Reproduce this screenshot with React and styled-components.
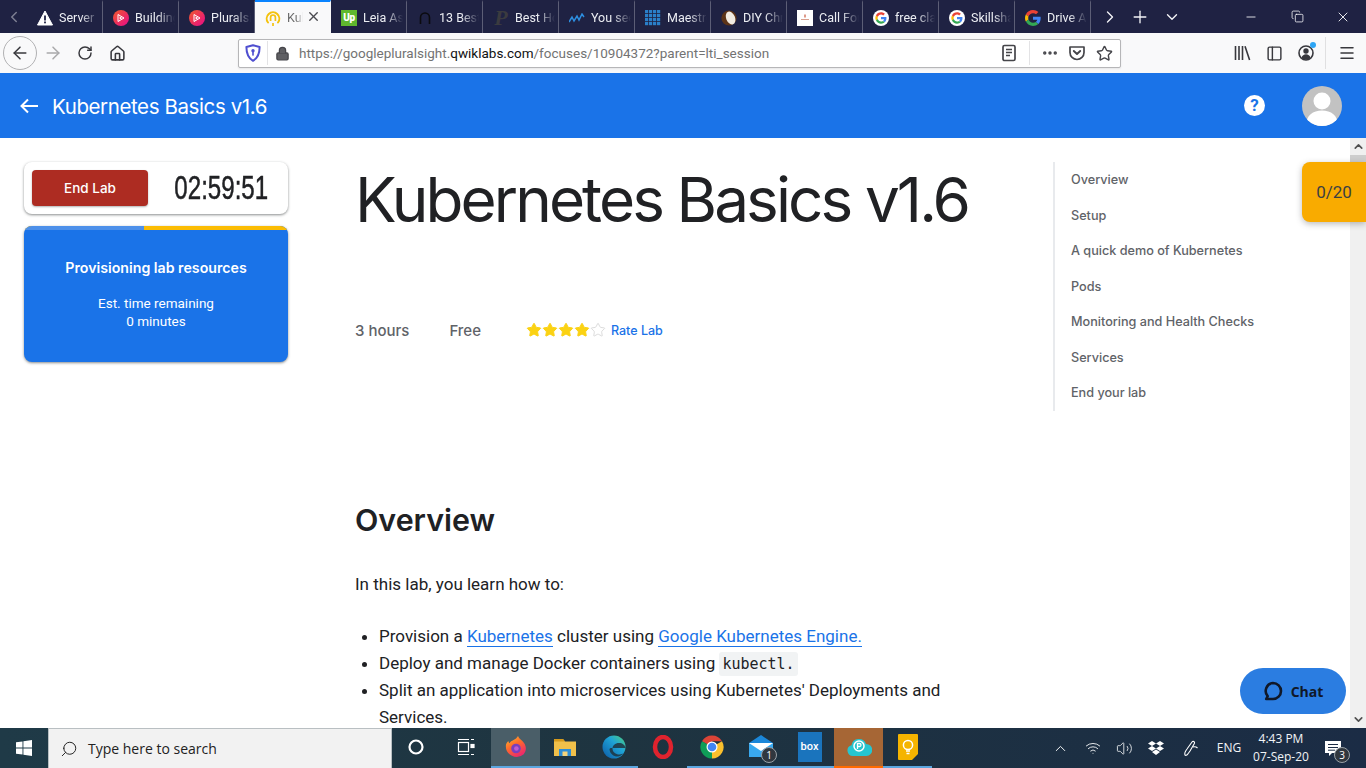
import React from "react";
import styled, { createGlobalStyle } from "styled-components";
import {
  ArrowLeft,
  ArrowRight,
  ChevronDown,
  ChevronLeft,
  ChevronRight,
  ChevronUp,
  Copy,
  Ellipsis,
  Home,
  Lock,
  Menu,
  Minus,
  PanelLeft,
  Plus,
  RotateCw,
  Search,
  Star,
  Volume2,
  Wifi,
  X,
} from "lucide-react";

const GlobalStyle = createGlobalStyle`
  html, body {
    margin: 0;
    padding: 0;
    background: #fff;
    overflow: hidden;
  }
  * { box-sizing: border-box; }
`;

const UI = `"Open Sans", "Noto Sans", sans-serif`;
const BODY = `Roboto, "Liberation Sans", sans-serif`;
const HEAD = `Inter, "Open Sans", sans-serif`;

const Frame = styled.div`
  width: 1366px;
  height: 768px;
  display: flex;
  flex-direction: column;
  overflow: hidden;
  font-family: ${BODY};
`;

/* browser chrome */
const TabStrip = styled.div`
  height: 33px;
  background: #1f2243;
  display: flex;
  align-items: stretch;
  color: #fff;
  flex: none;
`;

const StripButton = styled.div`
  width: ${(p) => p.$w}px;
  display: flex;
  align-items: center;
  justify-content: center;
  color: ${(p) => p.$color || "#f4f4f7"};
  flex: none;
`;

const Tab = styled.div`
  width: 76px;
  flex: none;
  display: flex;
  align-items: center;
  gap: 6px;
  padding-left: 10px;
  border-right: 1px solid ${(p) => (p.$active ? "transparent" : "#5c5e76")};
  background: ${(p) => (p.$active ? "#f9f9fa" : "transparent")};
  border-top: 2px solid ${(p) => (p.$active ? "#0a84ff" : "transparent")};
  color: ${(p) => (p.$active ? "#6a6a6a" : "#eceef3")};
  position: relative;
`;

const TabLabel = styled.span`
  font-family: ${BODY};
  font-size: 12.5px;
  white-space: nowrap;
  overflow: hidden;
  width: ${(p) => p.$w || 36}px;
  mask-image: linear-gradient(to right, #000 55%, transparent 100%);
`;

const TabClose = styled.span`
  position: absolute;
  right: 9px;
  top: 7px;
  color: #4a4a4f;
  display: flex;
`;

const FaviconBox = styled.div`
  width: 16px;
  height: 16px;
  flex: none;
  display: flex;
  align-items: center;
  justify-content: center;
`;

const UpBadge = styled.div`
  width: 16px;
  height: 16px;
  background: #5fb82e;
  color: #fff;
  font-family: ${BODY};
  font-size: 10px;
  font-weight: 900;
  line-height: 15px;
  text-align: center;
  letter-spacing: -0.5px;
`;

const BigP = styled.div`
  font-family: "Liberation Serif", serif;
  font-size: 22px;
  font-weight: 700;
  font-style: italic;
  color: #3b3b3f;
  line-height: 16px;
`;

const Toolbar = styled.div`
  height: 40px;
  background: #f9f9fa;
  display: flex;
  align-items: center;
  color: #38383d;
  flex: none;
  padding-left: 3px;
`;

const BackCircle = styled.div`
  width: 34px;
  height: 34px;
  border: 1px solid #b1b1b3;
  border-radius: 50%;
  display: flex;
  align-items: center;
  justify-content: center;
  background: #f9f9fa;
`;

const NavButton = styled.div`
  width: 32px;
  height: 34px;
  display: flex;
  align-items: center;
  justify-content: center;
  color: ${(p) => (p.$off ? "#a9a9ab" : "#38383d")};
`;

const UrlBar = styled.div`
  width: 883px;
  height: 29px;
  margin-left: 105px;
  background: #fff;
  border: 1px solid #b6b6b8;
  border-radius: 2px;
  display: flex;
  align-items: center;
  padding: 0 6px 0 6px;
  box-shadow: 0 1px 2px rgba(0, 0, 0, 0.08);
`;

const UrlDivider = styled.span`
  width: 1px;
  height: 24px;
  background: #e3e3e5;
  margin: ${(p) => p.$m};
  flex: none;
`;

const UrlText = styled.div`
  flex: 1;
  font-family: ${BODY};
  font-size: 13.5px;
  color: #737373;
  white-space: nowrap;
  margin-left: 9px;
  strong {
    font-weight: 400;
    color: #111;
  }
`;

const UrlIcon = styled.span`
  display: flex;
  width: ${(p) => p.$w || 20}px;
  justify-content: center;
  color: #45454a;
  flex: none;
`;

const RightTools = styled.div`
  display: flex;
  align-items: center;
  margin-left: 105px;
  color: #38383d;
`;

const ToolSlot = styled.div`
  width: 32px;
  height: 32px;
  display: flex;
  align-items: center;
  justify-content: center;
  position: relative;
`;

const Dot = styled.span`
  position: absolute;
  width: 6px;
  height: 6px;
  border-radius: 50%;
  background: #2ea5f5;
  top: 5px;
  right: 6px;
`;

const ToolDivider = styled.span`
  width: 1px;
  height: 32px;
  background: #e0e0e1;
  margin: 0 5px 0 3px;
`;

/* page */
const AppWindow = styled.div`
  flex: 1;
  min-height: 0;
  position: relative;
  display: flex;
  flex-direction: column;
`;

const AppBar = styled.header`
  height: 65px;
  flex: none;
  background: #1a73e8;
  color: #fff;
  display: flex;
  align-items: center;
  padding: 0 24px 0 19px;
`;

const AppTitle = styled.div`
  font-family: ${HEAD};
  font-size: 20.5px;
  font-weight: 400;
  margin: 2px 0 0 13px;
  letter-spacing: -0.4px;
  flex: 1;
`;

const HelpDot = styled.div`
  width: 21px;
  height: 21px;
  border-radius: 50%;
  background: #fff;
  color: #1a73e8;
  font-family: ${BODY};
  font-weight: 700;
  font-size: 17px;
  line-height: 21px;
  text-align: center;
  margin-right: 37px;
`;

const Avatar = styled.div`
  width: 40px;
  height: 40px;
  display: flex;
`;

const PageBody = styled.div`
  flex: 1;
  min-height: 0;
  display: flex;
  overflow: hidden;
`;

const Content = styled.div`
  flex: 1;
  min-width: 0;
  display: grid;
  grid-template-columns: 264px 631px 1fr;
  column-gap: 67px;
  padding: 24px 0 0 24px;
  align-items: start;
  overflow: hidden;
`;

const Sidebar = styled.aside`
  display: flex;
  flex-direction: column;
  gap: 12px;
`;

const TimerCard = styled.div`
  height: 52px;
  border-radius: 8px;
  background: #fff;
  box-shadow: 0 1px 3px rgba(60, 64, 67, 0.45), 0 1px 2px rgba(60, 64, 67, 0.2);
  display: flex;
  align-items: center;
  padding: 0 8px;
`;

const EndButton = styled.div`
  width: 116px;
  height: 36px;
  flex: none;
  border-radius: 4px;
  background: #ad2c22;
  color: #fff;
  font-family: ${HEAD};
  font-size: 13.5px;
  font-weight: 500;
  display: flex;
  align-items: center;
  justify-content: center;
  box-shadow: 0 1px 2px rgba(60, 64, 67, 0.4);
`;

const Timer = styled.div`
  flex: 1;
  min-width: 0;
  display: flex;
  justify-content: center;
  font-family: "Liberation Sans", sans-serif;
  font-size: 33px;
  color: #202124;
  line-height: 36px;
  padding-left: 14px;
  white-space: nowrap;
  span {
    flex: none;
    display: inline-block;
    transform: scaleX(0.73);
    -webkit-text-stroke: 0.5px #202124;
  }
`;

const ProvisionCard = styled.div`
  height: 136px;
  border-radius: 8px;
  overflow: hidden;
  background: #1a73e8;
  color: #fff;
  text-align: center;
  box-shadow: 0 1px 3px rgba(60, 64, 67, 0.45), 0 1px 2px rgba(60, 64, 67, 0.2);
`;

const ProgressTrack = styled.div`
  height: 4px;
  background: #fbbc04;
`;

const ProgressFill = styled.div`
  height: 4px;
  width: 120px;
  background: #4d90ea;
`;

const ProvisionTitle = styled.div`
  font-family: ${HEAD};
  font-size: 14.2px;
  font-weight: 600;
  line-height: 20px;
  margin-top: 28px;
`;

const ProvisionNote = styled.div`
  font-size: 13.5px;
  line-height: 18px;
  margin-top: 16px;
`;

const Main = styled.main`
  min-width: 0;
`;

const Title = styled.h1`
  margin: 0;
  font-family: ${HEAD};
  font-size: 62px;
  font-weight: 400;
  line-height: 76px;
  color: #202124;
  letter-spacing: -2.9px;
  white-space: nowrap;
`;

const MetaRow = styled.div`
  display: flex;
  align-items: center;
  margin-top: 80px;
  height: 24px;
  font-family: ${HEAD};
  font-size: 15px;
  font-weight: 500;
  color: #5f6368;
`;

const MetaItem = styled.span`
  margin-right: ${(p) => p.$gap}px;
`;

const Stars = styled.span`
  display: flex;
`;

const RateLink = styled.a`
  font-family: ${HEAD};
  font-size: 12.5px;
  font-weight: 500;
  color: #1a73e8;
  margin-left: 5px;
`;

const SectionTitle = styled.h2`
  margin: 160px 0 0;
  font-family: ${HEAD};
  font-size: 30.4px;
  font-weight: 600;
  line-height: 36px;
  color: #202124;
`;

const Para = styled.p`
  margin: 33px 0 0;
  font-size: 17px;
  line-height: 27px;
  color: #202124;
`;

const BulletList = styled.ul`
  margin: 25px 0 0;
  padding: 0 0 0 24px;
  max-width: 600px;
  font-size: 17px;
  line-height: 27px;
  color: #202124;
`;

const InlineLink = styled.a`
  color: #1a73e8;
  border-bottom: 1px solid #1a73e8;
`;

const Code = styled.code`
  font-family: "DejaVu Sans Mono", "Liberation Mono", monospace;
  font-size: 15px;
  line-height: 1;
  background: #f1f3f4;
  border-radius: 3px;
  padding: 3px 3px;
`;

const Toc = styled.nav`
  border-left: 2px solid #e8eaed;
  width: 240px;
  padding-left: 16px;
  display: flex;
  flex-direction: column;
`;

const TocItem = styled.div`
  font-family: ${HEAD};
  font-size: 12.65px;
  font-weight: 500;
  color: #5f6368;
  height: 35.5px;
  display: flex;
  align-items: center;
`;

const ScrollBar = styled.div`
  width: 16px;
  flex: none;
  background: #f0f0f0;
  display: flex;
  flex-direction: column;
  color: #505050;
`;

const ScrollArrow = styled.div`
  height: 17px;
  display: flex;
  align-items: center;
  justify-content: center;
  margin-top: ${(p) => p.$top || 0}px;
`;

const ScrollThumb = styled.div`
  height: 55px;
  background: #cdcdcd;
`;

const ScoreTab = styled.div`
  position: absolute;
  right: 0;
  top: 89px;
  width: 64px;
  height: 60px;
  background: #f9ab00;
  border-radius: 8px 0 0 8px;
  box-shadow: 0 2px 6px rgba(60, 64, 67, 0.35);
  color: #3c4043;
  font-size: 17px;
  display: flex;
  align-items: center;
  justify-content: center;
`;

const ChatButton = styled.div`
  position: absolute;
  left: 1240px;
  top: 595px;
  width: 106px;
  height: 46px;
  border-radius: 23px;
  background: #2b7de1;
  color: #101828;
  display: flex;
  align-items: center;
  justify-content: center;
  gap: 8px;
  font-family: "Open Sans", sans-serif;
  font-size: 14px;
  font-weight: 700;
`;

/* taskbar */
const Taskbar = styled.div`
  height: 40px;
  flex: none;
  background: linear-gradient(to right, #1f3a47 0%, #1e3440 45%, #1b2c45 100%);
  display: flex;
  align-items: stretch;
  color: #fff;
`;

const StartButton = styled.div`
  width: 48px;
  display: flex;
  align-items: center;
  justify-content: center;
  flex: none;
`;

const SearchBox = styled.div`
  width: 344px;
  flex: none;
  background: #f2f2f2;
  border: 1px solid #b9bfc2;
  border-bottom: none;
  display: flex;
  align-items: center;
  gap: 10px;
  padding-left: 11px;
  color: #222;
  font-family: ${UI};
  font-size: 14px;
`;

const MirroredSearch = styled(Search)`
  transform: scaleX(-1);
`;

const TaskSlot = styled.div`
  width: ${(p) => p.$w || 49}px;
  flex: none;
  display: flex;
  align-items: center;
  justify-content: center;
  position: relative;
  background: ${(p) => p.$bg || "transparent"};
  border-bottom: 2px solid ${(p) => p.$line || "transparent"};
`;

const CountBadge = styled.span`
  position: absolute;
  right: ${(p) => p.$r}px;
  bottom: ${(p) => p.$b}px;
  width: 16px;
  height: 16px;
  border-radius: 50%;
  background: #30373f;
  border: 1px solid #9aa2a8;
  color: #fff;
  font-family: ${UI};
  font-size: 10px;
  line-height: 14px;
  text-align: center;
`;

const Tray = styled.div`
  flex: 1;
  display: flex;
  align-items: center;
  justify-content: flex-end;
  color: #f2f4f6;
`;

const TraySlot = styled.div`
  width: ${(p) => p.$w}px;
  height: 40px;
  display: flex;
  align-items: center;
  justify-content: center;
  position: relative;
  flex: none;
`;

const TrayText = styled.div`
  font-family: ${UI};
  font-size: 12px;
  line-height: 18px;
  text-align: center;
`;

const BoxTile = styled.div`
  width: 24px;
  height: 30px;
  background: #1a74bd;
  color: #fff;
  font-family: ${BODY};
  font-size: 11px;
  font-weight: 500;
  line-height: 30px;
  text-align: center;
`;

/* drawn icons */
const GoogleG = ({ disc }) => (
  <svg width="16" height="16" viewBox="0 0 48 48">
    {disc && <circle cx="24" cy="24" r="24" fill="#fff" />}
    <g transform={disc ? "translate(7 7) scale(0.71)" : undefined}>
      <path fill="#EA4335" d="M24 9.5c3.54 0 6.71 1.22 9.21 3.6l6.85-6.85C35.9 2.38 30.47 0 24 0 14.62 0 6.51 5.38 2.56 13.22l7.98 6.19C12.43 13.72 17.74 9.5 24 9.5z" />
      <path fill="#4285F4" d="M46.98 24.55c0-1.57-.15-3.09-.38-4.55H24v9.02h12.94c-.58 2.96-2.26 5.48-4.78 7.18l7.73 6c4.51-4.18 7.09-10.36 7.09-17.65z" />
      <path fill="#FBBC05" d="M10.53 28.59c-.48-1.45-.76-2.99-.76-4.59s.27-3.14.76-4.59l-7.98-6.19C.92 16.46 0 20.12 0 24c0 3.88.92 7.54 2.56 10.78l7.97-6.19z" />
      <path fill="#34A853" d="M24 48c6.48 0 11.93-2.13 15.89-5.81l-7.73-6c-2.15 1.45-4.92 2.3-8.16 2.3-6.26 0-11.57-4.22-13.47-9.91l-7.98 6.19C6.51 42.62 14.62 48 24 48z" />
    </g>
  </svg>
);

const WarnIcon = () => (
  <svg width="16" height="16" viewBox="0 0 16 16">
    <path d="M8 1 15.5 15H.5z" fill="#fff" stroke="#fff" strokeLinejoin="round" />
    <rect x="7.1" y="5.5" width="1.8" height="5" fill="#1f2243" />
    <rect x="7.1" y="11.5" width="1.8" height="1.8" fill="#1f2243" />
  </svg>
);

const PluralsightIcon = ({ id }) => (
  <svg width="16" height="16" viewBox="0 0 16 16">
    <defs>
      <linearGradient id={id} x1="0" y1="0" x2="1" y2="1">
        <stop offset="0" stopColor="#f15b2a" />
        <stop offset="1" stopColor="#e80a89" />
      </linearGradient>
    </defs>
    <circle cx="8" cy="8" r="8" fill={`url(#${id})`} />
    <path d="M5 4.5v7l6-3.5z" fill="none" stroke="#fff" strokeWidth="1" />
    <path d="M6.6 6.4v3.2l2.7-1.6z" fill="#fff" />
  </svg>
);

const QwiklabsIcon = () => (
  <svg width="16" height="18" viewBox="0 0 16 18">
    <path d="M3 13.5A6.3 6.3 0 1 1 13 13.5" fill="none" stroke="#f4c20d" strokeWidth="2" strokeLinecap="round" />
    <path d="M5.6 12V8.4a2.4 2.4 0 0 1 4.8 0V12" fill="none" stroke="#f4c20d" strokeWidth="1.7" />
    <path d="M8 17v-3" stroke="#f4c20d" strokeWidth="1.7" />
  </svg>
);

const ArchIcon = () => (
  <svg width="14" height="14" viewBox="0 0 14 14">
    <path d="M2.5 13V6.5a4.5 4.5 0 0 1 9 0V13" fill="none" stroke="#0b0b0f" strokeWidth="1.6" />
  </svg>
);

const WaveIcon = () => (
  <svg width="16" height="10" viewBox="0 0 16 10">
    <path d="M0 9 3 4l2 4 3-5 2 4 3-6 2 3" fill="none" stroke="#2d8ee0" strokeWidth="1.5" />
  </svg>
);

const GridIcon = () => (
  <svg width="16" height="16" viewBox="0 0 16 16" fill="#2a7fc9">
    {[0, 4, 8, 12].flatMap((y) =>
      [0, 4, 8, 12].map((x) => <rect key={`${x}-${y}`} x={x} y={y} width="3.2" height="3.2" />)
    )}
  </svg>
);

const CoconutIcon = () => (
  <svg width="16" height="16" viewBox="0 0 16 16">
    <circle cx="8" cy="8" r="7.6" fill="#5c3418" />
    <ellipse cx="9.6" cy="8" rx="4.4" ry="6.8" transform="rotate(-22 9.6 8)" fill="#f1ece2" />
  </svg>
);

const PageIcon = () => (
  <svg width="16" height="16" viewBox="0 0 16 16">
    <rect width="16" height="16" fill="#fff" />
    <rect x="7.4" y="4.5" width="1.2" height="3" fill="#c9583c" />
    <rect x="4" y="9" width="8" height="1" fill="#d9a08f" />
  </svg>
);

const ShieldIcon = () => (
  <svg width="16" height="18" viewBox="0 0 16 18">
    <path d="M8 1.2 14.6 3c0 6.6-1.4 10.8-6.6 13.8C2.8 13.8 1.4 9.6 1.4 3z" fill="#fff" stroke="#4f4fd0" strokeWidth="2" strokeLinejoin="round" />
    <circle cx="8" cy="6.8" r="1.7" fill="#4f4fd0" />
    <rect x="7.2" y="7" width="1.6" height="4.6" fill="#4f4fd0" />
  </svg>
);

const ReaderIcon = () => (
  <svg width="16" height="18" viewBox="0 0 16 18" fill="none" stroke="#45454a" strokeWidth="1.7">
    <rect x="2" y="1.5" width="12" height="15" rx="1.5" />
    <path d="M5 5.5h6M5 8.5h6M5 11.5h4" strokeWidth="1.4" />
  </svg>
);

const PocketIcon = () => (
  <svg width="18" height="16" viewBox="0 0 18 16" fill="none" stroke="#45454a" strokeWidth="1.7">
    <path d="M2 2h14v5.5a7 7 0 0 1-14 0z" strokeLinejoin="round" />
    <path d="m5.8 6 3.2 3 3.2-3" strokeWidth="1.9" strokeLinecap="round" strokeLinejoin="round" />
  </svg>
);

const LibraryIcon = () => (
  <svg width="17" height="16" viewBox="0 0 17 16" fill="none" stroke="#38383d" strokeWidth="1.6">
    <path d="M1.5 1v14M5 1v14M8.5 1v14M11 1.3l4.6 13.7" />
  </svg>
);

const AccountIcon = () => (
  <svg width="16" height="18" viewBox="0 0 16 18">
    <circle cx="8" cy="9" r="7" fill="none" stroke="#38383d" strokeWidth="1.6" />
    <circle cx="8" cy="7" r="2.7" fill="#38383d" />
    <path d="M3.4 14c.7-2.7 2.5-3.8 4.6-3.8s3.9 1.1 4.6 3.8A7 7 0 0 1 3.4 14z" fill="#38383d" />
  </svg>
);

const BackArrow = () => (
  <svg width="20" height="16" viewBox="0 0 20 16" fill="none" stroke="#fff" strokeWidth="2">
    <path d="M19 8H2.5M9 1.5 2.5 8 9 14.5" />
  </svg>
);

const PersonAvatar = () => (
  <svg width="40" height="40" viewBox="0 0 40 40">
    <clipPath id="avatar-clip">
      <circle cx="20" cy="20" r="20" />
    </clipPath>
    <g clipPath="url(#avatar-clip)">
      <rect width="40" height="40" fill="#c2c2c2" />
      <circle cx="20" cy="15" r="8.5" fill="#fff" />
      <path d="M4 40c0-11 7-15.5 16-15.5S36 29 36 40z" fill="#fff" />
    </g>
  </svg>
);

const ChatBubble = () => (
  <svg width="20" height="20" viewBox="0 0 20 20" fill="none" stroke="#101828" strokeWidth="2.6">
    <path d="M10 2a8 8 0 0 1 0 16H3.2l1.5-2.8A8 8 0 0 1 10 2z" strokeLinejoin="round" />
  </svg>
);

const WinLogo = () => (
  <svg width="16" height="16" viewBox="0 0 16 16" fill="#fff">
    <path d="M0 2.3 6.5 1.4v6.2H0zM7.4 1.3 16 0v7.6H7.4zM0 8.400h6.5v6.200L0 13.700zM7.400 8.400H16V16l-8.600-1.200z" />
  </svg>
);

const CortanaRing = () => (
  <svg width="18" height="18" viewBox="0 0 18 18">
    <circle cx="9" cy="9" r="6.5" fill="none" stroke="#fff" strokeWidth="2.2" />
  </svg>
);

const TaskViewIcon = () => (
  <svg width="18" height="18" viewBox="0 0 18 18" fill="none" stroke="#fff" strokeWidth="1.2">
    <rect x="1.5" y="4.5" width="10" height="9" />
    <path d="M1 1.5h11M1 16.5h11M14 1.5h3M14 16.5h3" />
    <rect x="14" y="6.5" width="3" height="3" fill="#fff" />
  </svg>
);

const FirefoxIcon = () => (
  <svg width="24" height="24" viewBox="0 0 24 24">
    <defs>
      <linearGradient id="ff" x1="0" y1="0" x2="0.6" y2="1">
        <stop offset="0" stopColor="#ffbd2e" />
        <stop offset="0.5" stopColor="#ff6b2b" />
        <stop offset="1" stopColor="#ec2a6a" />
      </linearGradient>
    </defs>
    <path d="M14 1c1 3 4 4 6 7 2.5 3.5 2.5 8-.3 11.2A10.8 10.8 0 0 1 2 9.5C2.600 8 3.300 7 4.500 6c0 1 .3 1.600 1 2.200C7 5.200 12 5 14 1z" fill="url(#ff)" />
    <circle cx="12" cy="13.5" r="4.8" fill="#7a3fbd" />
    <circle cx="12.4" cy="13.5" r="2.3" fill="#c05ad0" />
  </svg>
);

const FolderIcon = () => (
  <svg width="22" height="22" viewBox="0 0 22 22">
    <path d="M0 3h9l2 2.5h11V20H0z" fill="#f0c04a" />
    <path d="M0 3h9l2 2.5H0z" fill="#d69a1c" />
    <rect x="5" y="13" width="12" height="7" fill="#2c8dd6" />
    <rect x="8.5" y="15.5" width="5" height="4.5" fill="#f4d57c" />
  </svg>
);

const EdgeIcon = () => (
  <svg width="24" height="24" viewBox="0 0 24 24">
    <defs>
      <linearGradient id="edge" x1="0" y1="1" x2="1" y2="0">
        <stop offset="0" stopColor="#0c59a4" />
        <stop offset="0.6" stopColor="#1fa3d6" />
        <stop offset="1" stopColor="#50d27a" />
      </linearGradient>
    </defs>
    <circle cx="12" cy="12" r="11.5" fill="url(#edge)" />
    <path d="M23.5 13c-.5-3-3-5-6.500-5-4 0-6.500 2.500-6.500 5.500 0 3.500 3 6 7 6 1.500 0 3-.5 4-1.200-1.500 2-3.500 3-5.500 3.200-4 .3-8-2.500-8.500-7 0-1 .8-1.500 1.500-1.500" fill="#1e3440" opacity="0.85" />
  </svg>
);

const OperaIcon = () => (
  <svg width="24" height="24" viewBox="0 0 24 24">
    <ellipse cx="12" cy="12" rx="8" ry="10" fill="none" stroke="#e0232e" strokeWidth="4.5" />
  </svg>
);

const ChromeIcon = () => (
  <svg width="24" height="24" viewBox="0 0 24 24">
    <path d="M12 12 2 6.2A11.5 11.5 0 0 1 22 6.2H12z" fill="#db4437" />
    <path d="M12 12 22 6.2A11.5 11.5 0 0 1 12 23.5z" fill="#fbc02d" />
    <path d="M12 12v11.5A11.5 11.5 0 0 1 2 6.2z" fill="#0f9d58" />
    <circle cx="12" cy="12" r="5.5" fill="#fff" />
    <circle cx="12" cy="12" r="4.3" fill="#4285f4" />
  </svg>
);

const MailIcon = () => (
  <svg width="24" height="24" viewBox="0 0 24 24">
    <path d="M0 8 12 0l12 8v14H0z" fill="#1b87d9" />
    <path d="M0 8h24v14H0z" fill="#39a9ef" />
    <path d="M0 8l12 8 12-8H0z" fill="#fff" />
  </svg>
);

const CloudIcon = () => (
  <svg width="26" height="22" viewBox="0 0 26 22">
    <path d="M7 20a5.5 5.5 0 0 1-1.5-10.800A7.500 7.500 0 0 1 20 8a6 6 0 0 1 .5 12z" fill="#26c5cf" />
    <circle cx="13" cy="10" r="5" fill="none" stroke="#fff" strokeWidth="1.5" />
    <path d="M11.5 13V7.5h2a1.5 1.5 0 0 1 0 3h-2" fill="none" stroke="#fff" strokeWidth="1.3" />
  </svg>
);

const KeepIcon = () => (
  <svg width="20" height="26" viewBox="0 0 20 26">
    <path d="M0 1a1 1 0 0 1 1-1h18a1 1 0 0 1 1 1v19l-6 6H1a1 1 0 0 1-1-1z" fill="#f5b400" />
    <circle cx="10" cy="11" r="4.6" fill="none" stroke="#fff" strokeWidth="1.5" />
    <path d="M8 17h4M8.5 19.5h3" stroke="#fff" strokeWidth="1.4" />
  </svg>
);

const DropboxIcon = () => (
  <svg width="16" height="15" viewBox="0 0 16 15" fill="#fff">
    <path d="M4 0 8 2.5 4 5 0 2.5zM12 0l4 2.5L12 5 8 2.5zM4 5l4 2.5L4 10 0 7.5zM12 5l4 2.5L12 10 8 7.5zM4 11l4-2.5 4 2.5-4 3z" />
  </svg>
);

const PenIcon = () => (
  <svg width="18" height="18" viewBox="0 0 18 18" fill="none" stroke="#fff" strokeWidth="1.1">
    <path d="M3 16c-1-2 .5-4 2-6l5-7c1-1.3 3-.3 2.5 1.2L8 12c-1 1.5-3.5 5.500-5 4zM11 8c2-.5 3.500 0 4.500 1" />
  </svg>
);

const NoteIcon = () => (
  <svg width="16" height="15" viewBox="0 0 16 15" fill="#fff">
    <path d="M0 0h16v12H7l-3 3v-3H0z" />
    <path d="M3 3.5h10M3 6.5h10M3 9.2h7" stroke="#1b2c45" strokeWidth="1" />
  </svg>
);

const tabs = [
  { icon: <WarnIcon />, label: "Server" },
  { icon: <PluralsightIcon id="ps-a" />, label: "Building" },
  { icon: <PluralsightIcon id="ps-b" />, label: "Pluralsight" },
  { icon: <QwiklabsIcon />, label: "Kubernetes", active: true },
  { icon: <UpBadge>Up</UpBadge>, label: "Leia Aspen" },
  { icon: <ArchIcon />, label: "13 Best" },
  { icon: <BigP>P</BigP>, label: "Best Hosting" },
  { icon: <WaveIcon />, label: "You see" },
  { icon: <GridIcon />, label: "Maestro" },
  { icon: <CoconutIcon />, label: "DIY Christmas" },
  { icon: <PageIcon />, label: "Call For" },
  { icon: <GoogleG disc />, label: "free classes" },
  { icon: <GoogleG disc />, label: "Skillshare" },
  { icon: <GoogleG />, label: "Drive Away" },
];

const toc = [
  "Overview",
  "Setup",
  "A quick demo of Kubernetes",
  "Pods",
  "Monitoring and Health Checks",
  "Services",
  "End your lab",
];

const tileLine = "#5ba6e0";

export default function App() {
  return (
    <Frame>
      <GlobalStyle />
      <TabStrip>
        <StripButton $w={27} $color="#7d7f92">
          <ChevronLeft size={18} />
        </StripButton>
        {tabs.map((t) => (
          <Tab key={t.label} $active={t.active}>
            <FaviconBox>{t.icon}</FaviconBox>
            <TabLabel $w={t.active ? 16 : 40}>{t.label}</TabLabel>
            {t.active && (
              <TabClose>
                <X size={15} strokeWidth={2.2} />
              </TabClose>
            )}
          </Tab>
        ))}
        <StripButton $w={5} />
        <StripButton $w={28}>
          <ChevronRight size={20} strokeWidth={1.6} />
        </StripButton>
        <StripButton $w={32}>
          <Plus size={20} strokeWidth={1.6} />
        </StripButton>
        <StripButton $w={32}>
          <ChevronDown size={18} strokeWidth={1.8} />
        </StripButton>
        <StripButton $w={40} />
        <StripButton $w={46}>
          <Minus size={14} strokeWidth={1.5} />
        </StripButton>
        <StripButton $w={46}>
          <Copy size={13} strokeWidth={1.5} />
        </StripButton>
        <StripButton $w={46}>
          <X size={16} strokeWidth={1.4} />
        </StripButton>
      </TabStrip>

      <Toolbar>
        <BackCircle>
          <ArrowLeft size={20} strokeWidth={1.8} />
        </BackCircle>
        <NavButton $off>
          <ArrowRight size={20} strokeWidth={1.8} />
        </NavButton>
        <NavButton>
          <RotateCw size={16} strokeWidth={2.2} />
        </NavButton>
        <NavButton>
          <Home size={17} strokeWidth={2.2} />
        </NavButton>
        <UrlBar>
          <ShieldIcon />
          <UrlDivider $m="0 6px 0 6px" />
          <UrlIcon $w={16}>
            <Lock size={15} fill="#5f5f63" strokeWidth={2} />
          </UrlIcon>
          <UrlText>
            https://googlepluralsight.<strong>qwiklabs.com</strong>/focuses/10904372?parent=lti_session
          </UrlText>
          <UrlIcon>
            <ReaderIcon />
          </UrlIcon>
          <UrlDivider $m="0 10px 0 10px" />
          <UrlIcon>
            <Ellipsis size={18} strokeWidth={2.6} />
          </UrlIcon>
          <UrlIcon $w={34}>
            <PocketIcon />
          </UrlIcon>
          <UrlIcon>
            <Star size={17} strokeWidth={2} />
          </UrlIcon>
        </UrlBar>
        <RightTools>
          <ToolSlot><LibraryIcon /></ToolSlot>
          <ToolSlot><PanelLeft size={17} strokeWidth={2} /></ToolSlot>
          <ToolSlot><AccountIcon /><Dot /></ToolSlot>
          <ToolDivider />
          <ToolSlot><Menu size={18} strokeWidth={2} /></ToolSlot>
        </RightTools>
      </Toolbar>

      <AppWindow>
        <AppBar>
          <BackArrow />
          <AppTitle>Kubernetes Basics v1.6</AppTitle>
          <HelpDot>?</HelpDot>
          <Avatar><PersonAvatar /></Avatar>
        </AppBar>
        <PageBody>
          <Content>
            <Sidebar>
              <TimerCard>
                <EndButton>End Lab</EndButton>
                <Timer><span>02:59:51</span></Timer>
              </TimerCard>
              <ProvisionCard>
                <ProgressTrack><ProgressFill /></ProgressTrack>
                <ProvisionTitle>Provisioning lab resources</ProvisionTitle>
                <ProvisionNote>
                  Est. time remaining
                  <br />
                  0 minutes
                </ProvisionNote>
              </ProvisionCard>
            </Sidebar>
            <Main>
              <Title>Kubernetes Basics v1.6</Title>
              <MetaRow>
                <MetaItem $gap={40}>3 hours</MetaItem>
                <MetaItem $gap={45}>Free</MetaItem>
                <Stars>
                  {[0, 1, 2, 3, 4].map((i) => (
                    <Star
                      key={i}
                      size={16}
                      fill={i < 4 ? "#fbd213" : "#fff"}
                      stroke={i < 4 ? "#fbd213" : "#dcdcdc"}
                      strokeWidth={1.5}
                    />
                  ))}
                </Stars>
                <RateLink>Rate Lab</RateLink>
              </MetaRow>
              <SectionTitle>Overview</SectionTitle>
              <Para>In this lab, you learn how to:</Para>
              <BulletList>
                <li>
                  Provision a <InlineLink>Kubernetes</InlineLink> cluster using{" "}
                  <InlineLink>Google Kubernetes Engine.</InlineLink>
                </li>
                <li>
                  Deploy and manage Docker containers using <Code>kubectl.</Code>
                </li>
                <li>Split an application into microservices using Kubernetes' Deployments and Services.</li>
              </BulletList>
            </Main>
            <Toc>
              {toc.map((item) => (
                <TocItem key={item}>{item}</TocItem>
              ))}
            </Toc>
          </Content>
          <ScrollBar>
            <ScrollArrow><ChevronUp size={13} strokeWidth={3} /></ScrollArrow>
            <ScrollThumb />
            <ScrollArrow $top={501}><ChevronDown size={13} strokeWidth={3} /></ScrollArrow>
          </ScrollBar>
        </PageBody>
        <ScoreTab>0/20</ScoreTab>
        <ChatButton>
          <ChatBubble />
          Chat
        </ChatButton>
      </AppWindow>

      <Taskbar>
        <StartButton><WinLogo /></StartButton>
        <SearchBox>
          <MirroredSearch size={18} strokeWidth={1.3} />
          Type here to search
        </SearchBox>
        <TaskSlot $w={48}><CortanaRing /></TaskSlot>
        <TaskSlot $w={51}><TaskViewIcon /></TaskSlot>
        <TaskSlot $bg="#4a5e68" $line={tileLine}><FirefoxIcon /></TaskSlot>
        <TaskSlot $line={tileLine}><FolderIcon /></TaskSlot>
        <TaskSlot $line={tileLine}><EdgeIcon /></TaskSlot>
        <TaskSlot><OperaIcon /></TaskSlot>
        <TaskSlot $line={tileLine}><ChromeIcon /></TaskSlot>
        <TaskSlot $line={tileLine}>
          <MailIcon />
          <CountBadge $r={8} $b={3}>1</CountBadge>
        </TaskSlot>
        <TaskSlot $line={tileLine}><BoxTile>box</BoxTile></TaskSlot>
        <TaskSlot $bg="#a66635" $line="#ff6a00"><CloudIcon /></TaskSlot>
        <TaskSlot $line={tileLine}><KeepIcon /></TaskSlot>
        <Tray>
          <TraySlot $w={31}><ChevronUp size={17} strokeWidth={1.4} /></TraySlot>
          <TraySlot $w={33}><Wifi size={16} strokeWidth={1.4} /></TraySlot>
          <TraySlot $w={30}><Volume2 size={17} strokeWidth={1.2} /></TraySlot>
          <TraySlot $w={33}><DropboxIcon /></TraySlot>
          <TraySlot $w={38}><PenIcon /></TraySlot>
          <TraySlot $w={38}><TrayText>ENG</TrayText></TraySlot>
          <TraySlot $w={66}>
            <TrayText>
              4:43 PM
              <br />
              07-Sep-20
            </TrayText>
          </TraySlot>
          <TraySlot $w={38}>
            <NoteIcon />
            <CountBadge $r={2} $b={5}>3</CountBadge>
          </TraySlot>
          <TraySlot $w={14} />
        </Tray>
      </Taskbar>
    </Frame>
  );
}
